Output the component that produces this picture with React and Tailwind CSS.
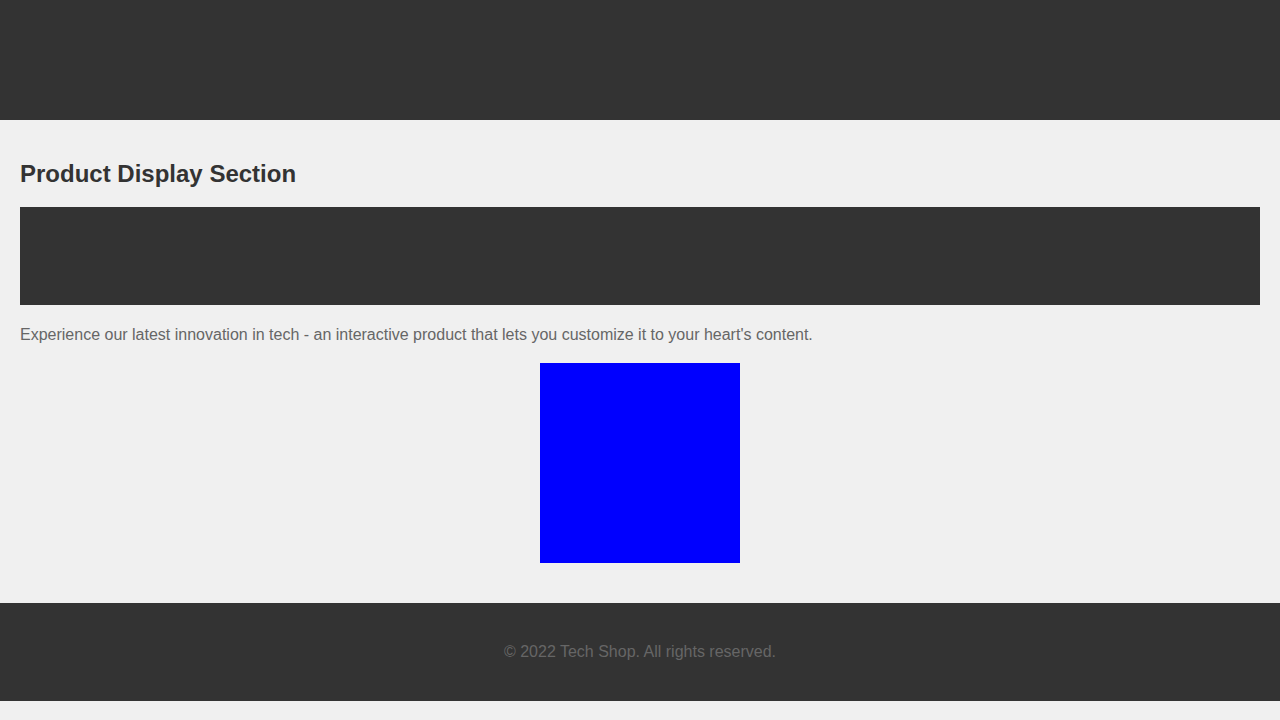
const App = () => {
  return (
    <div className="min-h-screen bg-[#f0f0f0] font-['Liberation_Sans',Arial,sans-serif]">
      <header className="h-[120px] bg-[#333333]" />

      <main className="p-5">
        <h2 className="mt-5 mb-5 text-2xl leading-[27px] font-bold text-[#333333]">
          Product Display Section
        </h2>
        <div className="h-[98px] bg-[#333333]" />
        <p className="mt-[18px] text-base leading-6 text-[#666666]">
          Experience our latest innovation in tech - an interactive product that
          lets you customize it to your heart's content.
        </p>
        <div className="mt-4 mb-5 flex justify-center">
          <div className="h-[200px] w-[200px] bg-[#0000ff]" />
        </div>
      </main>

      <footer className="bg-[#333333] py-10 text-center">
        <p className="text-base leading-[18px] text-[#666666]">
          © 2022 Tech Shop. All rights reserved.
        </p>
      </footer>
    </div>
  );
};

export default App;
